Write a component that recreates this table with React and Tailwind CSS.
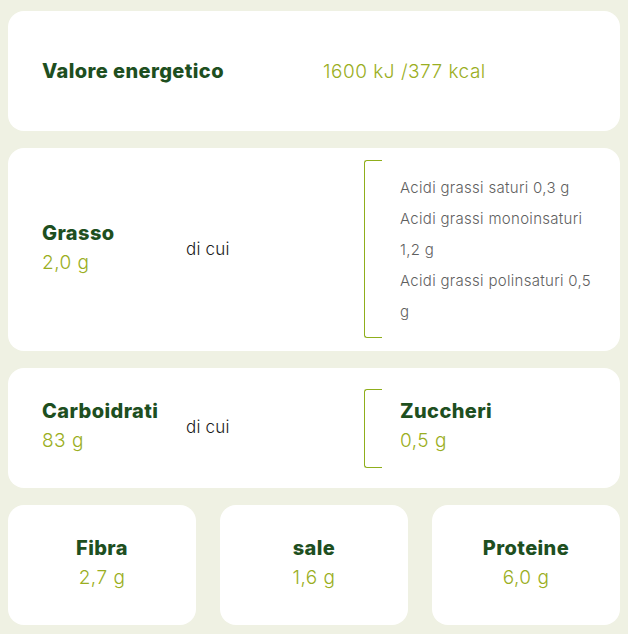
import React from 'react';

const font = { fontFamily: 'Inter, "Open Sans", sans-serif' };

function Bracket({ className = '' }) {
    return <div className={`border-l border-y border-[#8fae1b] rounded-l-[3px] w-[18px] ${className}`} />;
}

function Card({ children, className = '' }) {
    return <div className={`bg-white rounded-[16px] ${className}`}>{children}</div>;
}

const title = 'text-[20px] font-extrabold tracking-[0.4px] text-[#1e4f1f] leading-[29px]';
const amount = 'text-[19px] font-light tracking-[0.5px] text-[#9aae22] leading-[29px]';

export default function App() {
    const fats = [
        'Acidi grassi saturi 0,3 g',
        'Acidi grassi monoinsaturi 1,2 g',
        'Acidi grassi polinsaturi 0,5 g',
    ];
    const small = [
        { label: 'Fibra', value: '2,7 g' },
        { label: 'sale', value: '1,6 g' },
        { label: 'Proteine', value: '6,0 g' },
    ];

    return (
        <div style={font} className="min-h-[634px] w-[628px] bg-[#eff1e3] pt-[11px] pb-[10px] px-[8px] flex flex-col gap-[17px]">

            {/* Valore energetico */}
            <Card className="h-[120px] flex items-center pl-[34px]">
                <div className={`w-[281px] ${title}`}>Valore energetico</div>
                <div className={amount}>1600 kJ /377 kcal</div>
            </Card>

            {/* Grasso */}
            <Card className="h-[203px] flex items-center pl-[34px]">
                <div className="w-[144px] flex flex-col -mt-[4px]">
                    <span className={title}>Grasso</span>
                    <span className={amount}>2,0 g</span>
                </div>
                <div className="w-[178px] text-[17px] font-light tracking-[0.2px] text-[#1a1a1a]">di cui</div>
                <div className="flex h-[178px] self-start mt-[12px]">
                    <Bracket className="h-full" />
                    <ul className="w-[226px] pl-[18px] pr-[10px] py-[12px] text-[15px] font-light tracking-[0.3px] leading-[31px] text-[#5f5f5f]">
                        {fats.map((f) => (
                            <li key={f}>{f}</li>
                        ))}
                    </ul>
                </div>
            </Card>

            {/* Carboidrati */}
            <Card className="h-[120px] flex items-center pl-[34px]">
                <div className="w-[144px] flex flex-col -mt-[4px]">
                    <span className={title}>Carboidrati</span>
                    <span className={amount}>83 g</span>
                </div>
                <div className="w-[178px] text-[17px] font-light tracking-[0.2px] text-[#1a1a1a]">di cui</div>
                <div className="flex h-[79px] items-center">
                    <Bracket className="h-full" />
                    <div className="pl-[18px] flex flex-col -mt-[4px]">
                        <span className={title}>Zuccheri</span>
                        <span className={amount}>0,5 g</span>
                    </div>
                </div>
            </Card>

            {/* Fibra / sale / Proteine */}
            <div className="grid grid-cols-3 gap-[24px]">
                {small.map((s) => (
                    <Card key={s.label} className="h-[120px] flex flex-col items-center justify-center pb-[4px]">
                        <span className={title}>{s.label}</span>
                        <span className={amount}>{s.value}</span>
                    </Card>
                ))}
            </div>
        </div>
    );
}
